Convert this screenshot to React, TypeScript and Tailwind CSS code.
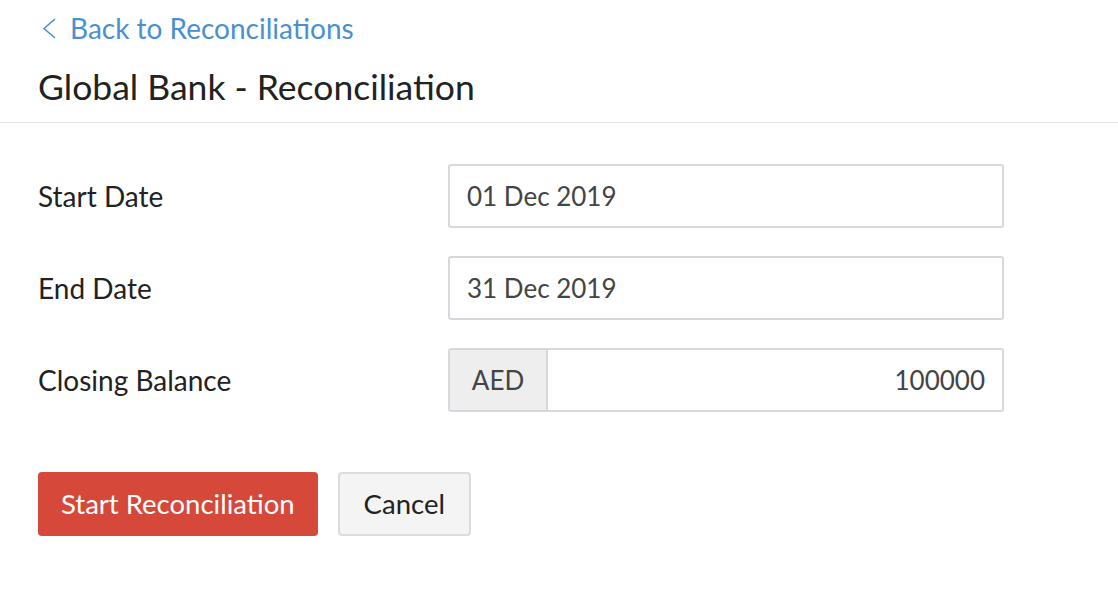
const rows = [
  { label: "Start Date", value: "01 Dec 2019" },
  { label: "End Date", value: "31 Dec 2019" },
];

export default function App() {
  return (
    <div className="w-[1118px] h-[600px] bg-white text-[#222] font-['Lato',sans-serif]">
      {/* Header */}
      <div className="px-[38px] pt-[11px] pb-[14px] border-b border-[#e8e8e8]">
        <a href="#" className="flex items-center gap-[13px] text-[#4a90d0] text-[28px] leading-[34px]">
          <svg width="15" height="21" viewBox="0 0 15 21" className="ml-[4px]" fill="none" stroke="currentColor" strokeWidth="1.6">
            <polyline points="13,1 2,10.5 13,20" />
          </svg>
          <span>Back to Reconciliations</span>
        </a>
        <h1 className="mt-[21px] text-[35.5px] leading-[42px] text-[#222]">Global Bank - Reconciliation</h1>
      </div>

      {/* Form */}
      <div className="px-[38px] pt-[41px]">
        <div className="flex flex-col gap-[28px]">
          {rows.map((r) => (
            <div key={r.label} className="flex items-center">
              <label className="w-[410px] text-[28px] text-[#222]">{r.label}</label>
              <div className="w-[556px] h-[64px] flex items-center px-[17px] border-2 border-[#d5d8dc] rounded-[3px] text-[26px] text-[#444]">
                {r.value}
              </div>
            </div>
          ))}
          <div className="flex items-center">
            <label className="w-[410px] text-[28px] text-[#222]">Closing Balance</label>
            <div className="w-[556px] h-[64px] flex border-2 border-[#d5d8dc] rounded-[3px] text-[26px] text-[#444]">
              <div className="w-[98px] flex items-center justify-center bg-[#eeeeee] border-r-2 border-[#d5d8dc]">AED</div>
              <div className="flex-1 flex items-center justify-end px-[17px]">100000</div>
            </div>
          </div>
        </div>

        <div className="mt-[60px] flex gap-[20px]">
          <button className="h-[64px] px-[23px] rounded-[4px] bg-[#d6483a] text-white text-[27.5px]">
            Start Reconciliation
          </button>
          <button className="h-[64px] px-[24px] rounded-[4px] bg-[#f4f4f4] border-2 border-[#dcdcdc] text-[#222] text-[27.5px]">
            Cancel
          </button>
        </div>
      </div>
    </div>
  );
}
